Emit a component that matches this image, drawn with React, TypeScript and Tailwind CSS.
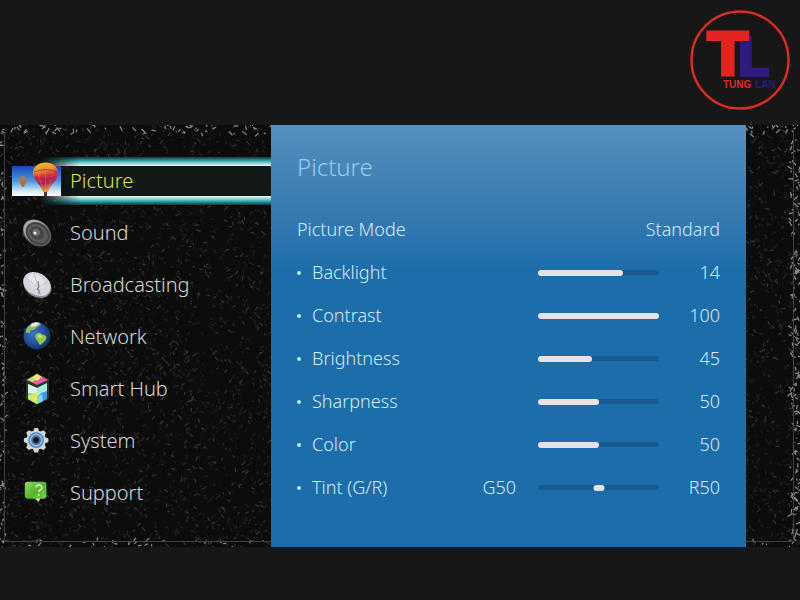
import { useState, type ComponentType } from 'react';
import clsx from 'clsx';

function BalloonIcon() {
    return (
        <svg viewBox="0 0 50 42" className="h-[42px] w-[50px]" aria-hidden="true">
            <defs>
                <linearGradient id="sky" x1="0" y1="0" x2="0" y2="1">
                    <stop offset="0" stopColor="#1548b8" />
                    <stop offset="0.5" stopColor="#4a96e0" />
                    <stop offset="0.85" stopColor="#d8ecfa" />
                    <stop offset="1" stopColor="#ffffff" />
                </linearGradient>
                <linearGradient id="balloon" x1="0.2" y1="0" x2="0.4" y2="1">
                    <stop offset="0" stopColor="#f6c52c" />
                    <stop offset="0.3" stopColor="#e88a32" />
                    <stop offset="0.5" stopColor="#d02c48" />
                    <stop offset="0.72" stopColor="#a8265c" />
                    <stop offset="1" stopColor="#e8a030" />
                </linearGradient>
            </defs>
            <path d="M0 6H49V36H0Z" fill="url(#sky)" />
            <path d="M7 20c0-5 8-5 8 0 0 3-2 4-3 7h-2c-1-3-3-4-3-7Z" fill="#b07a4c" />
            <path d="M9 18c1 3 1 5 2 8M13 18c-1 3-1 5-2 8" stroke="#6f7d4a" strokeWidth="0.8" fill="none" />
            <path d="M21 13C21-1 46-1 46 13c0 8-8 11-10 19h-5C29 24 21 21 21 13Z" fill="url(#balloon)" />
            <path d="M29 3c-4 6-3 15 3 28M38 3c4 6 3 15-3 28M33.500 3v28" stroke="#f0a040" strokeWidth="0.8" opacity="0.4" fill="none" />
            <path d="M22 12c7-3 16-3 23 0M23 17c7 3 14 3 20 0" stroke="#8d1f58" strokeWidth="1.200" opacity="0.6" fill="none" />
            <path d="M32 32h3v4h-3Z" fill="#5b3426" />
        </svg>
    );
}

function SpeakerIcon() {
    return (
        <svg viewBox="0 0 32 32" className="size-8" aria-hidden="true">
            <g transform="rotate(38 16 16)">
                <ellipse cx="16" cy="16" rx="15.500" ry="12" fill="#5c5c5c" />
                <ellipse cx="15" cy="15.500" rx="14" ry="11" fill="#a9a9a9" />
                <ellipse cx="17" cy="16" rx="13" ry="10.500" fill="#434343" />
                <ellipse cx="17" cy="16" rx="11" ry="8.500" fill="#5b5b5b" />
                <ellipse cx="16" cy="16" rx="7.500" ry="6" fill="#444" />
                <ellipse cx="15" cy="16" rx="4" ry="3.500" fill="#6b6b6b" />
            </g>
            <circle cx="14" cy="16" r="1.500" fill="#f2f2f2" />
        </svg>
    );
}

function DishIcon() {
    return (
        <svg viewBox="0 0 32 32" className="size-8" aria-hidden="true">
            <g transform="rotate(32 16 15)">
                <ellipse cx="17" cy="16" rx="15" ry="11.500" fill="#8d8b93" />
                <ellipse cx="16" cy="15" rx="14.500" ry="11" fill="#d6d4dc" />
                <ellipse cx="14" cy="13" rx="9" ry="6" fill="#e6e5ea" />
            </g>
            <path d="M4 8l13 11M13 4l4 15M27 12l-10 7M17 19l3 7" stroke="#b8b6c0" strokeWidth="0.8" />
            <path d="M17 12l1 6-2 2 2 1v4" stroke="#6a6872" strokeWidth="1" fill="none" />
        </svg>
    );
}

function GlobeIcon() {
    return (
        <svg viewBox="0 0 32 32" className="size-8" aria-hidden="true">
            <defs>
                <radialGradient id="ocean" cx="0.4" cy="0.4" r="0.65">
                    <stop offset="0" stopColor="#3f76c4" />
                    <stop offset="0.6" stopColor="#244f9c" />
                    <stop offset="1" stopColor="#14285e" />
                </radialGradient>
            </defs>
            <circle cx="16" cy="15" r="13.500" fill="url(#ocean)" />
            <path d="M6 7c3-5 10-6 14-4-1 3-4 2-5 4-2 3-5 1-6 4-1 2-3 0-4 1 0-2 0-3 1-5Z" fill="#8cbc62" />
            <path d="M10 3c3-2 6-2 9-1l-4 3-5 1Z" fill="#e8f1df" />
            <path d="M15 13c3-2 5-1 7 1 3 0 4 2 3 4-1 3-4 4-6 6-2-2-2-4-4-6-1-2-1-3 0-5Z" fill="#8fc94a" />
            <path d="M17 14c2-1 4 1 5 2-2 1-4 2-5 0Z" fill="#c5df72" />
        </svg>
    );
}

function CubeIcon() {
    return (
        <svg viewBox="0 0 32 32" className="size-8" aria-hidden="true">
            <path d="M16 0l12 6v20l-12 6L5 26V6Z" fill="#26352c" />
            <path d="M16 1l11 6-11 5L6 7Z" fill="#e85ba8" />
            <path d="M16 1l-10 6 6 2 5-4Z" fill="#bce466" />
            <path d="M16 1l5 3-5 4-4-3Z" fill="#f4e37b" />
            <path d="M7 11l9 4v16l-9-5Z" fill="#63d3c8" />
            <path d="M7 11l9 4v6l-9-1Z" fill="#dff3e2" />
            <path d="M7 23l9-4v12l-9-5Z" fill="#dfe95b" />
            <path d="M16 15l10-5v16l-10 5Z" fill="#3d9ee8" />
            <path d="M16 15l10-5v8l-6 2-4 4Z" fill="#a8ecdf" />
            <path d="M16 24l5-3 1 7-6 3Z" fill="#7cd8f2" />
        </svg>
    );
}

function GearIcon() {
    const teeth = [0, 45, 90, 135, 180, 225, 270, 315];
    return (
        <svg viewBox="1 1 32 32" className="size-7" aria-hidden="true">
            {teeth.map((angle) => (
                <path key={angle} d="M12 7l2-5h4l2 5Z" fill="#d4d6d6" transform={`rotate(${angle} 16 16)`} />
            ))}
            <circle cx="16" cy="16" r="11" fill="#d4d6d6" />
            <circle cx="16" cy="16" r="9" fill="#4a86c0" />
            <circle cx="16" cy="16" r="7.500" fill="#8db9de" />
            <circle cx="16" cy="16" r="5.500" fill="#4a6a9c" />
            <circle cx="16" cy="16" r="3.200" fill="#17141c" />
        </svg>
    );
}

function HelpIcon() {
    return (
        <svg viewBox="2 1 32 32" className="size-[30px]" aria-hidden="true">
            <defs>
                <linearGradient id="bubble" x1="0" y1="0" x2="1" y2="1">
                    <stop offset="0" stopColor="#8fdc5a" />
                    <stop offset="0.5" stopColor="#55b52b" />
                    <stop offset="1" stopColor="#85d45a" />
                </linearGradient>
            </defs>
            <path d="M8 5h17q3 0 3 3v12q0 3-3 3h-4l-1 3-4-3H8q-3 0-3-3V8q0-3 3-3Z" fill="url(#bubble)" />
            <path d="M16 23l4 3 1-3Z" fill="#e4f2dc" />
            <path d="M17 11c1-4 7-3 6 1-1 2-3 2-3 4M20 18v2" stroke="#c4ecac" strokeWidth="2" fill="none" />
        </svg>
    );
}

type MenuItem = { title: string; icon: ComponentType };

const menu: MenuItem[] = [
    { title: 'Picture', icon: BalloonIcon },
    { title: 'Sound', icon: SpeakerIcon },
    { title: 'Broadcasting', icon: DishIcon },
    { title: 'Network', icon: GlobeIcon },
    { title: 'Smart Hub', icon: CubeIcon },
    { title: 'System', icon: GearIcon },
    { title: 'Support', icon: HelpIcon },
];

const settings = [
    { id: 'backlight', label: 'Backlight', value: 14, max: 20 },
    { id: 'contrast', label: 'Contrast', value: 100, max: 100 },
    { id: 'brightness', label: 'Brightness', value: 45, max: 100 },
    { id: 'sharpness', label: 'Sharpness', value: 50, max: 100 },
    { id: 'color', label: 'Color', value: 50, max: 100 },
];

// Short strokes of static, same result on every render
function makeStatic() {
    let seed = 7;
    const rand = () => {
        seed = (seed * 16807) % 2147483647;
        return seed / 2147483647;
    };
    const stroke = (x: number, y: number, len: number) => {
        const dx = (rand() - 0.5) * len;
        const dy = (rand() - 0.5) * len;
        return `M${x.toFixed(1)} ${y.toFixed(1)}l${dx.toFixed(1)} ${dy.toFixed(1)}`;
    };
    const fill = (count: number, x: number, y: number, w: number, h: number, len: number) =>
        Array.from({ length: count }, () => stroke(x + rand() * w, y + rand() * h, len)).join('');

    return {
        dim: fill(5000, 0, 0, 800, 421, 8),
        mid: fill(2200, 0, 0, 800, 421, 8),
        edge: [
            fill(210, 0, 0, 800, 9, 9),
            fill(110, 0, 414, 800, 7, 7),
            fill(90, 0, 0, 5, 421, 7),
            fill(170, 791, 0, 9, 421, 9),
        ].join(''),
    };
}

const staticNoise = makeStatic();

function StaticBackdrop() {
    return (
        <svg
            viewBox="0 0 800 421"
            preserveAspectRatio="none"
            className="absolute inset-0 h-full w-full"
            aria-hidden="true"
        >
            <path d={staticNoise.dim} stroke="#1e1e1e" strokeWidth="1.500" />
            <path d={staticNoise.mid} stroke="#343434" strokeWidth="1.200" />
            <path d={staticNoise.edge} stroke="#8a8a8a" strokeWidth="1.200" />
            <path d="M4.500 8V415.500H793.500V8" stroke="#404040" fill="none" />
        </svg>
    );
}

function Logo() {
    return (
        <svg viewBox="0 0 100 100" className="size-[100px]" role="img" aria-label="Tung Lan">
            <circle cx="50" cy="50" r="48.500" fill="none" stroke="#dc2a26" strokeWidth="2.500" />
            <g fontFamily="DejaVu Sans" fontWeight="700" strokeWidth="2">
                <text x="46" y="66" fontSize="53" fill="#30197f" stroke="#30197f">L</text>
                <text x="17" y="66" fontSize="61" fill="#e3241f" stroke="#e3241f">T</text>
            </g>
            <g fontFamily="Liberation Sans" fontWeight="700" fontSize="10">
                <text x="33" y="78" fill="#dc2a26">TUNG</text>
                <text x="65" y="78" fill="#30197f">LAN</text>
            </g>
        </svg>
    );
}

type SliderProps = {
    id: string;
    value: number;
    max: number;
    centered?: boolean;
    onChange: (value: number) => void;
};

function Slider({ id, value, max, centered, onChange }: SliderProps) {
    const percent = `${(value / max) * 100}%`;

    return (
        <div className="relative flex h-[6px] w-[121px] items-center">
            <span className="h-[5px] w-full rounded-full bg-[#185a91]" />
            {centered ? (
                <span
                    className="absolute h-[6px] w-[11px] -translate-x-1/2 rounded-full bg-[#e6e2ea]"
                    style={{ left: percent }}
                />
            ) : (
                <span className="absolute left-0 h-[6px] rounded-full bg-[#e6e2ea]" style={{ width: percent }} />
            )}
            <input
                id={id}
                type="range"
                min={0}
                max={max}
                value={value}
                onChange={(e) => onChange(Number(e.target.value))}
                className="absolute inset-0 w-full cursor-pointer appearance-none bg-transparent [&::-webkit-slider-thumb]:size-[6px] [&::-webkit-slider-thumb]:appearance-none"
            />
        </div>
    );
}

function SettingLabel({ id, text }: { id: string; text: string }) {
    return (
        <label htmlFor={id} className="flex flex-1 items-center gap-[11px]">
            <span className="size-1 rounded-full bg-[#bfe2f4]" />
            {text}
        </label>
    );
}

type SettingRowProps = { id: string; label: string; value: number; max: number };

function SettingRow({ id, label, value: initial, max }: SettingRowProps) {
    const [value, setValue] = useState(initial);

    return (
        <div className="flex h-[43px] items-center">
            <SettingLabel id={id} text={label} />
            <Slider id={id} value={value} max={max} onChange={setValue} />
            <output htmlFor={id} className="w-[61px] text-right">{value}</output>
        </div>
    );
}

function TintRow() {
    const [red, setRed] = useState(50);

    return (
        <div className="flex h-[43px] items-center">
            <SettingLabel id="tint" text="Tint (G/R)" />
            <span className="mr-[22px]">G{100 - red}</span>
            <Slider id="tint" value={red} max={100} centered onChange={setRed} />
            <output htmlFor="tint" className="w-[61px] text-right">R{red}</output>
        </div>
    );
}

export default function App() {
    const [active, setActive] = useState('Picture');

    return (
        <div className="min-h-screen bg-[#171717] font-['Noto_Sans',sans-serif]">
            <header className="flex h-[125px] justify-end px-[10px] pt-[10px]">
                <Logo />
            </header>

            <main className="relative flex bg-[#0c0c0c]">
                <StaticBackdrop />

                {/* Main menu */}
                <nav className="relative w-[271px] pt-[30px] pb-7">
                    {menu.map(({ title, icon: Icon }) => (
                        <button
                            key={title}
                            type="button"
                            onClick={() => setActive(title)}
                            className={clsx(
                                'relative flex h-[52px] w-full items-center gap-2 pl-3 text-left text-[20px] font-light',
                                active === title ? 'text-[#dbe435]' : 'text-[#d6d6d6]'
                            )}
                        >
                            {active === title && (
                                <span className="absolute inset-y-[2px] right-0 left-[40px] flex flex-col justify-between bg-[#111816] mask-[linear-gradient(to_right,transparent,black_40px)]">
                                    <span className="h-[9px] bg-linear-to-b from-[#0a3a3e] via-[#43b9bd] to-[#f4fbf6]" />
                                    <span className="h-[9px] bg-linear-to-t from-[#0a3a3e] via-[#43b9bd] to-[#f4fbf6]" />
                                </span>
                            )}
                            <span className="relative flex w-[50px] justify-center">
                                <Icon />
                            </span>
                            <span className="relative">{title}</span>
                        </button>
                    ))}
                </nav>

                {/* Picture settings */}
                <section className="relative flex-1 bg-[#1c6da9] bg-linear-to-b from-[#558fbe] via-[#1c6da9] via-35% to-[#1c6da9] px-[26px] text-[18px] font-light text-[#d4eafa]">
                    <h1 className="pt-[26px] pb-[25px] text-[24px] leading-8 text-[#98cbe8]">Picture</h1>
                    <button type="button" className="flex h-[43px] w-full items-center justify-between">
                        <span>Picture Mode</span>
                        <span>Standard</span>
                    </button>
                    {settings.map((setting) => (
                        <SettingRow key={setting.id} {...setting} />
                    ))}
                    <TintRow />
                </section>

                <div className="w-[54px]" />
            </main>
        </div>
    );
}
